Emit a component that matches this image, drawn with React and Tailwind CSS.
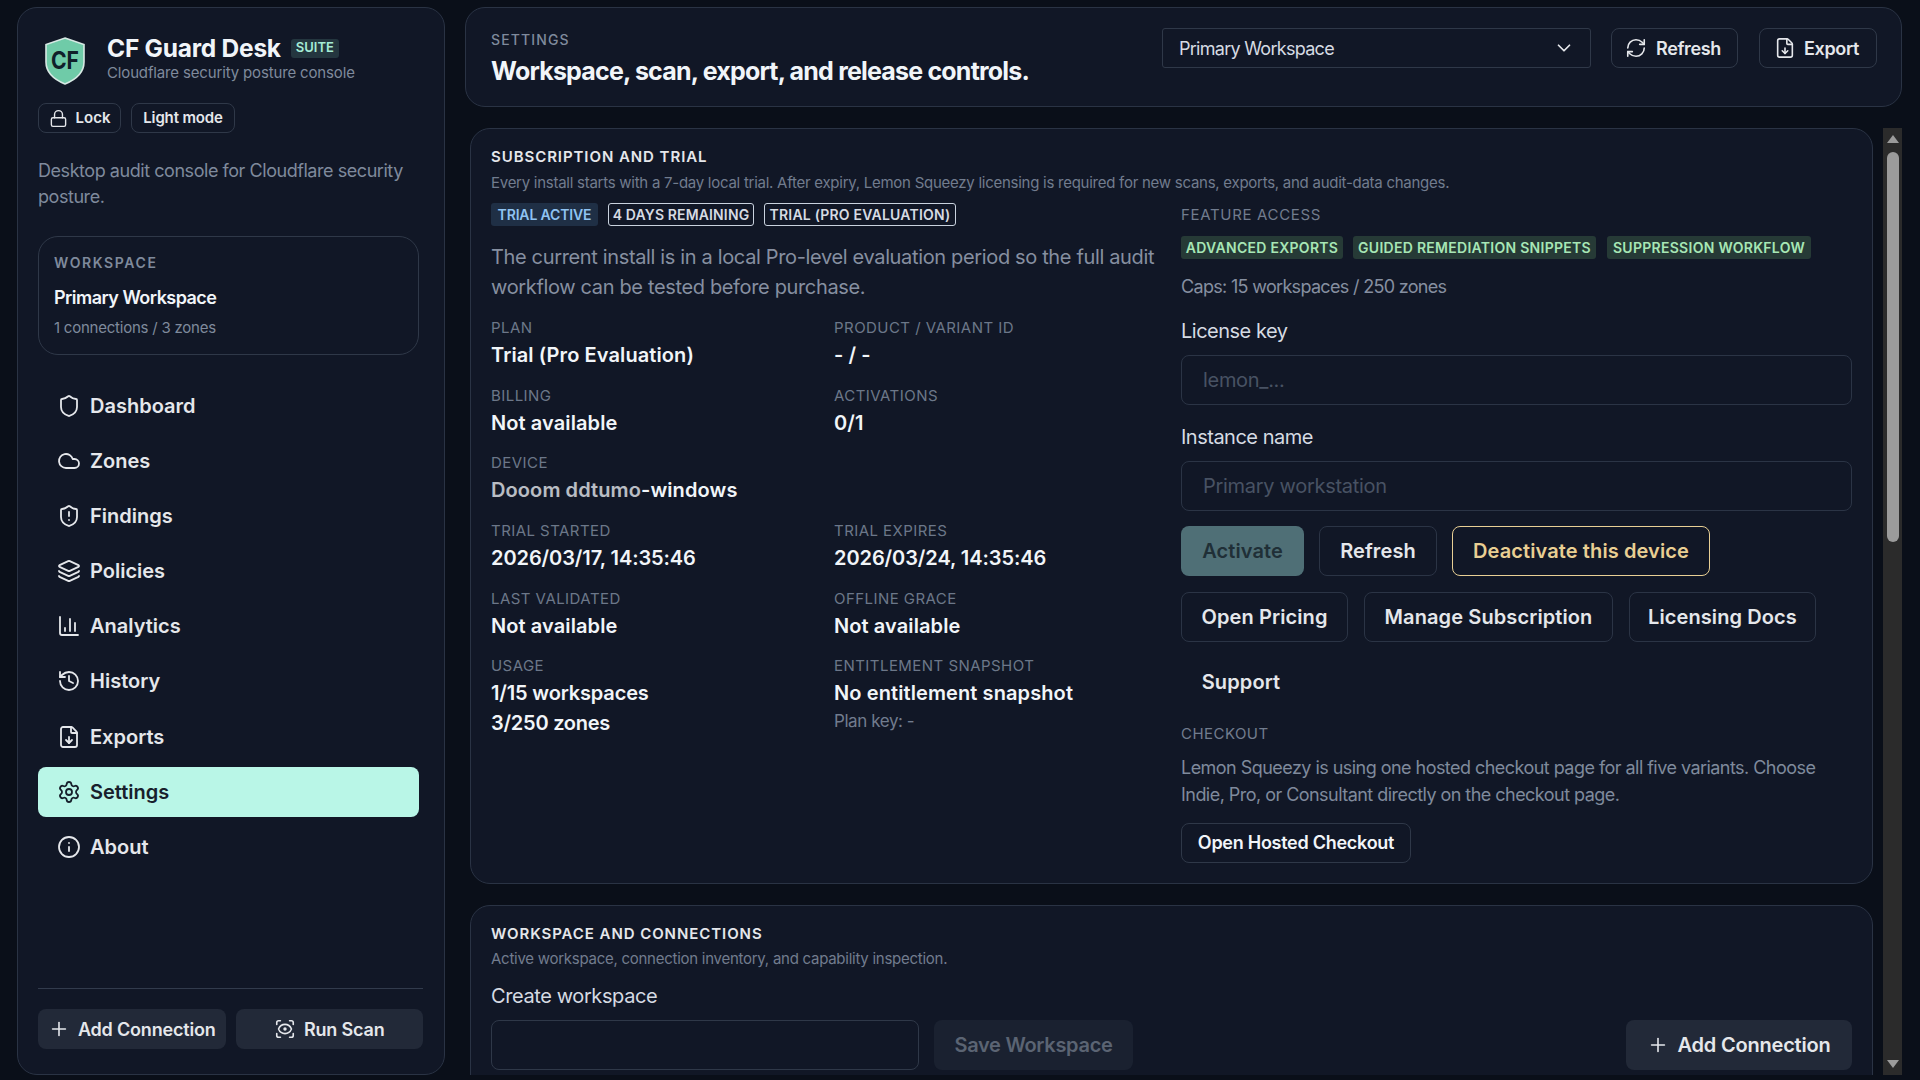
import { Shield, Cloud, ShieldAlert, Layers, ChartColumn, History, FileDown, Settings, Info, Lock, Plus, ScanEye, RefreshCw, ChevronDown } from "lucide-react";

const navItems = [
  { label: "Dashboard", icon: Shield },
  { label: "Zones", icon: Cloud },
  { label: "Findings", icon: ShieldAlert },
  { label: "Policies", icon: Layers },
  { label: "Analytics", icon: ChartColumn },
  { label: "History", icon: History },
  { label: "Exports", icon: FileDown },
  { label: "Settings", icon: Settings, active: true },
  { label: "About", icon: Info },
];

export default function App() {
  return (
    <div className="h-screen overflow-hidden flex gap-[20px] pl-[17px] pt-[7px] pb-[5px] bg-[#0a0f19] font-['Inter',sans-serif] text-[#e5e7eb]">
      <Sidebar />
      <main className="w-[1437px] flex flex-col">
        <TopBar />
        <div className="mt-[21px] ml-[5px] h-[948px] flex overflow-hidden">
          <div className="w-[1403px] shrink-0 flex flex-col gap-[21px]">
            <SubscriptionCard />
            <WorkspaceCard />
          </div>
          <ScrollBar />
        </div>
      </main>
    </div>
  );
}

/* --- Sidebar --- */

function Sidebar() {
  return (
    <aside className="w-[428px] shrink-0 flex flex-col border border-[#2a3344] rounded-[20px] bg-[#111726] pl-[20px] pr-[21px] pb-[25px]">
      <div className="flex items-start mt-[29px]">
        <CfLogo />
        <div className="ml-[21px] -mt-[3px]">
          <div className="flex items-center h-[28px]">
            <h1 className="text-[24.5px] leading-[28px] font-bold text-[#f1f5f9] tracking-[-0.01em]">CF Guard Desk</h1>
            <span className="ml-[10px] h-[19px] px-[5px] flex items-center rounded-[3px] bg-[#24363f] text-[13px] font-semibold text-[#a5ecd6]">SUITE</span>
          </div>
          <p className="mt-[1px] text-[15px] leading-[20px] text-[#7f8a9c] tracking-[-0.01em]">Cloudflare security posture console</p>
        </div>
      </div>

      <div className="flex gap-[10px] mt-[18px]">
        <button className="h-[30px] w-[83px] flex items-center justify-center gap-[8px] rounded-[8px] border border-[#2f3848] text-[15px] font-semibold text-[#e5e7eb]">
          <Lock className="w-[19px] h-[19px]" strokeWidth={1.75} />
          Lock
        </button>
        <button className="h-[30px] w-[104px] rounded-[8px] border border-[#2f3848] text-[15px] font-semibold text-[#e5e7eb] tracking-[-0.01em]">Light mode</button>
      </div>

      <p className="mt-[25px] mr-[5px] text-[18px] leading-[26px] text-[#7f8a9c] tracking-[-0.025em]">Desktop audit console for Cloudflare security posture.</p>

      <div className="mt-[26px] mr-[4px] h-[119px] rounded-[20px] border border-[#2f3848] px-[15px] pt-[16px]">
        <div className="text-[14px] leading-[20px] font-semibold tracking-[0.115em] text-[#7f8a9c]">WORKSPACE</div>
        <div className="mt-[13px] text-[18px] leading-[24px] font-semibold text-[#f1f5f9] tracking-[-0.03em]">Primary Workspace</div>
        <div className="mt-[8px] text-[15px] leading-[20px] text-[#7f8a9c] tracking-[-0.015em]">1 connections / 3 zones</div>
      </div>

      <nav className="mt-[25.5px] mr-[4px] flex flex-col gap-[5.2px]">
        {navItems.map((item) => (
          <NavItem key={item.label} {...item} />
        ))}
      </nav>

      <div className="mt-auto border-t border-[#323b4c] pt-[20px] flex gap-[10px]">
        <button className="h-[40px] flex-1 flex items-center justify-center gap-[8px] rounded-[8px] bg-[#222938] text-[18px] font-semibold text-[#e5e7eb] tracking-[-0.01em]">
          <Plus className="w-[22px] h-[22px]" strokeWidth={1.75} />
          Add Connection
        </button>
        <button className="h-[40px] flex-1 flex items-center justify-center gap-[8px] rounded-[8px] bg-[#222938] text-[18px] font-semibold text-[#e5e7eb] tracking-[-0.01em]">
          <ScanEye className="w-[22px] h-[22px]" strokeWidth={1.75} />
          Run Scan
        </button>
      </div>
    </aside>
  );
}

function NavItem({ label, icon: Icon, active }) {
  return (
    <div className={`h-[50px] flex items-center pl-[19px] gap-[9px] rounded-[8px] text-[20px] font-semibold ${active ? "bg-[#b9f6e7] text-[#17202c]" : "text-[#e5e7eb]"}`}>
      <Icon className="w-[24px] h-[24px]" strokeWidth={1.8} />
      {label}
    </div>
  );
}

function CfLogo() {
  return (
    <svg width="42" height="48" viewBox="0 0 42 48" className="ml-[6px] shrink-0">
      <path d="M21 1 L40 7.5 V25 C40 35 32 42.5 21 47 C10 42.5 2 35 2 25 V7.5 Z" fill="#6fcba8" stroke="#d7e9e4" strokeWidth="1.6" />
      <text x="21" y="32" textAnchor="middle" textLength="28" lengthAdjust="spacingAndGlyphs" fontFamily="Inter, sans-serif" fontWeight="700" fontSize="24" fill="#10202a">CF</text>
    </svg>
  );
}

/* --- Top bar --- */

function TopBar() {
  return (
    <header className="h-[100px] shrink-0 flex items-start justify-between border border-[#2a3344] rounded-[20px] bg-[#111726] pl-[25px] pr-[24px]">
      <div className="pt-[22px]">
        <div className="text-[14px] leading-[20px] font-medium tracking-[0.08em] text-[#7f8a9c]">SETTINGS</div>
        <h2 className="mt-[6px] text-[25px] leading-[30px] font-bold text-[#f1f5f9] tracking-[-0.032em]">Workspace, scan, export, and release controls.</h2>
      </div>
      <div className="flex items-center mt-[20px]">
        <div className="w-[429px] h-[40px] flex items-center justify-between border border-[#2f3848] rounded-[3px] pl-[16px] pr-[15px] text-[18px] text-[#d6dbe3] tracking-[-0.04em]">
          Primary Workspace
          <ChevronDown className="w-[22px] h-[22px] text-[#e5e7eb]" strokeWidth={1.9} />
        </div>
        <button className="ml-[20px] w-[127px] h-[40px] flex items-center gap-[9px] pl-[13px] border border-[#2f3848] rounded-[8px] text-[18px] font-semibold text-[#e5e7eb] tracking-[-0.02em]">
          <RefreshCw className="w-[22px] h-[22px]" strokeWidth={1.75} />
          Refresh
        </button>
        <button className="ml-[21px] w-[118px] h-[40px] flex items-center gap-[8px] pl-[14px] border border-[#2f3848] rounded-[8px] text-[18px] font-semibold text-[#e5e7eb] tracking-[-0.02em]">
          <FileDown className="w-[22px] h-[22px]" strokeWidth={1.75} />
          Export
        </button>
      </div>
    </header>
  );
}

/* --- Subscription card --- */

function SubscriptionCard() {
  return (
    <section className="h-[756px] shrink-0 border border-[#2a3344] rounded-[20px] bg-[#111726] px-[20px] pt-[18px]">
      <h3 className="text-[15px] leading-[20px] font-semibold tracking-[0.062em] text-[#e5e7eb]">SUBSCRIPTION AND TRIAL</h3>
      <p className="mt-[6px] text-[15px] leading-[20px] text-[#717c8e] tracking-[-0.0175em]">Every install starts with a 7-day local trial. After expiry, Lemon Squeezy licensing is required for new scans, exports, and audit-data changes.</p>

      <div className="flex mt-[10px]">
        <div className="w-[665px] shrink-0">
          <div className="flex gap-[10px]">
            <span className="h-[23px] w-[107px] flex items-center justify-center rounded-[3px] bg-[#1f2f45] text-[14px] font-semibold text-[#8fc3f2] tracking-[-0.01em]">TRIAL ACTIVE</span>
            <span className="h-[23px] w-[146px] flex items-center justify-center rounded-[3px] border border-[#c9d2de] text-[14px] font-semibold text-[#d6dbe3] tracking-[0.01em]">4 DAYS REMAINING</span>
            <span className="h-[23px] w-[192px] flex items-center justify-center rounded-[3px] border border-[#c9d2de] text-[14px] font-semibold text-[#d6dbe3] tracking-[0.015em] whitespace-nowrap">TRIAL (PRO EVALUATION)</span>
          </div>
          <p className="mt-[16px] -mr-[8px] text-[20px] leading-[30px] text-[#868fa0] tracking-[-0.0175em]">The current install is in a local Pro-level evaluation period so the full audit workflow can be tested before purchase.</p>

          <div className="mt-[16px] grid grid-cols-[343px_1fr] gap-y-[15.7px]">
            <Field label="PLAN" value="Trial (Pro Evaluation)" />
            <Field label="PRODUCT / VARIANT ID" value="- / -" />
            <Field label="BILLING" value="Not available" />
            <Field label="ACTIVATIONS" value="0/1" />
            <Field label="DEVICE" value={<><span className="opacity-75">Dooom ddtumo</span>-windows</>} />
            <div />
            <Field label="TRIAL STARTED" value={<span className="tracking-[-0.004em]">2026/03/17, 14:35:46</span>} />
            <Field label="TRIAL EXPIRES" value={<span className="tracking-[-0.004em]">2026/03/24, 14:35:46</span>} />
            <Field label="LAST VALIDATED" value="Not available" />
            <Field label="OFFLINE GRACE" value="Not available" />
            <Field label="USAGE" value={<span className="tracking-[-0.008em]">1/15 workspaces</span>} extra={<div className="text-[20px] leading-[30px] font-semibold text-[#f1f5f9] tracking-[-0.012em]">3/250 zones</div>} />
            <Field label="ENTITLEMENT SNAPSHOT" value="No entitlement snapshot" extra={<div className="mt-[1px] text-[17px] leading-[24px] text-[#717c8e] tracking-[-0.025em]">Plan key: -</div>} />
          </div>
        </div>

        <div className="ml-[25px] flex-1 mt-[2px]">
          <div className="text-[15px] leading-[20px] text-[#717c8e] tracking-[0.045em]">FEATURE ACCESS</div>
          <div className="flex mt-[11px]">
            <GreenBadge className="w-[162px]">ADVANCED EXPORTS</GreenBadge>
            <GreenBadge className="ml-[10px] w-[243px]">GUIDED REMEDIATION SNIPPETS</GreenBadge>
            <GreenBadge className="ml-[11px] w-[204px]">SUPPRESSION WORKFLOW</GreenBadge>
          </div>
          <p className="mt-[13px] text-[18px] leading-[30px] text-[#868fa0] tracking-[-0.038em]">Caps: 15 workspaces / 250 zones</p>

          <FormLabel className="mt-[17px]">License key</FormLabel>
          <TextInput placeholder="lemon_..." />
          <FormLabel className="mt-[19.5px]">Instance name</FormLabel>
          <TextInput placeholder="Primary workstation" className="mt-[12.5px]" />

          <div className="mt-[15px] flex flex-wrap">
            <button className="h-[50px] w-[123px] rounded-[8px] bg-[#4f6f76] text-[20px] font-semibold text-[#202f37] tracking-[0.005em]">Activate</button>
            <OutlineButton className="ml-[15px] w-[118px]">Refresh</OutlineButton>
            <button className="ml-[15px] h-[50px] w-[258px] rounded-[8px] border border-[#e8cf94] text-[20px] font-semibold text-[#e9cf93] tracking-[0.005em]">Deactivate this device</button>
          </div>
          <div className="mt-[15.5px] flex gap-x-[16px]">
            <OutlineButton className="w-[167px]">Open Pricing</OutlineButton>
            <OutlineButton className="w-[249px]">Manage Subscription</OutlineButton>
            <OutlineButton className="w-[187px]">Licensing Docs</OutlineButton>
          </div>
          <button className="mt-[15.5px] h-[50px] w-[120px] block text-[20px] font-semibold text-[#e5e7eb] tracking-[0.005em]">Support</button>

          <div className="mt-[17px] text-[15px] leading-[20px] text-[#717c8e] tracking-[0.03em]">CHECKOUT</div>
          <p className="mt-[9.5px] text-[18px] leading-[27px] text-[#7f8a9c] tracking-[-0.03em]">Lemon Squeezy is using one hosted checkout page for all five variants. Choose Indie, Pro, or Consultant directly on the checkout page.</p>
          <button className="mt-[15px] h-[40px] w-[230px] rounded-[8px] border border-[#2f3848] text-[18px] font-semibold text-[#f1f5f9] tracking-[-0.015em]">Open Hosted Checkout</button>
        </div>
      </div>
    </section>
  );
}

function Field({ label, value, extra }) {
  return (
    <div>
      <div className="text-[15px] leading-[20px] text-[#6c7789] tracking-[0.03em]">{label}</div>
      <div className="mt-[2px] text-[20px] leading-[30px] font-semibold text-[#f1f5f9] tracking-[0.005em] whitespace-nowrap">{value}</div>
      {extra}
    </div>
  );
}

function GreenBadge({ className, children }) {
  return (
    <span className={`h-[23px] flex items-center justify-center rounded-[3px] bg-[#263a36] text-[14px] font-semibold text-[#a7e6b5] tracking-[0.02em] whitespace-nowrap ${className}`}>{children}</span>
  );
}

function FormLabel({ className, children }) {
  return <div className={`text-[20px] leading-[24px] text-[#d6dbe3] tracking-[-0.025em] ${className}`}>{children}</div>;
}

function TextInput({ placeholder, className = "mt-[12px]" }) {
  return (
    <input
      readOnly
      placeholder={placeholder}
      className={`block w-full h-[50px] px-[21px] rounded-[8px] border border-[#2b3445] bg-transparent text-[20px] tracking-[-0.015em] placeholder:text-[#485263] outline-none ${className}`}
    />
  );
}

function OutlineButton({ className, children }) {
  return (
    <button className={`h-[50px] rounded-[8px] border border-[#2b3445] text-[20px] font-semibold text-[#e5e7eb] tracking-[0.005em] ${className}`}>{children}</button>
  );
}

/* --- Workspace card (cut off by the scroll area) --- */

function WorkspaceCard() {
  return (
    <section className="h-[300px] shrink-0 border border-[#2a3344] rounded-[20px] bg-[#111726] px-[20px] pt-[18px]">
      <h3 className="text-[15px] leading-[20px] font-semibold tracking-[0.062em] text-[#e5e7eb]">WORKSPACE AND CONNECTIONS</h3>
      <p className="mt-[5px] text-[15px] leading-[20px] text-[#717c8e] tracking-[-0.0175em]">Active workspace, connection inventory, and capability inspection.</p>
      <div className="mt-[13px] text-[20px] leading-[28px] text-[#d6dbe3] tracking-[-0.02em]">Create workspace</div>
      <div className="mt-[10px] flex">
        <input readOnly className="w-[428px] h-[50px] rounded-[8px] border border-[#2f3848] bg-transparent outline-none" />
        <button className="ml-[15px] w-[199px] h-[50px] rounded-[8px] bg-[#1a2130] text-[20px] font-semibold text-[#5b6473] tracking-[-0.015em]">Save Workspace</button>
        <button className="ml-auto w-[226px] h-[50px] flex items-center justify-center gap-[8px] rounded-[8px] bg-[#222938] text-[20px] font-semibold text-[#e5e7eb] tracking-[-0.01em]">
          <Plus className="w-[22px] h-[22px]" strokeWidth={1.75} />
          Add Connection
        </button>
      </div>
    </section>
  );
}

function ScrollBar() {
  return (
    <div className="ml-[10px] w-[20px] shrink-0 flex flex-col items-center bg-[#2b2b2b]">
      <svg width="12" height="8" viewBox="0 0 12 8" className="mt-[7px]"><path d="M6 0 L12 8 H0 Z" fill="#9b9b9b" /></svg>
      <div className="mt-[9px] w-[12px] h-[390px] rounded-full bg-[#9b9b9b]" />
      <svg width="12" height="8" viewBox="0 0 12 8" className="mt-auto mb-[7px]"><path d="M0 0 H12 L6 8 Z" fill="#9b9b9b" /></svg>
    </div>
  );
}
